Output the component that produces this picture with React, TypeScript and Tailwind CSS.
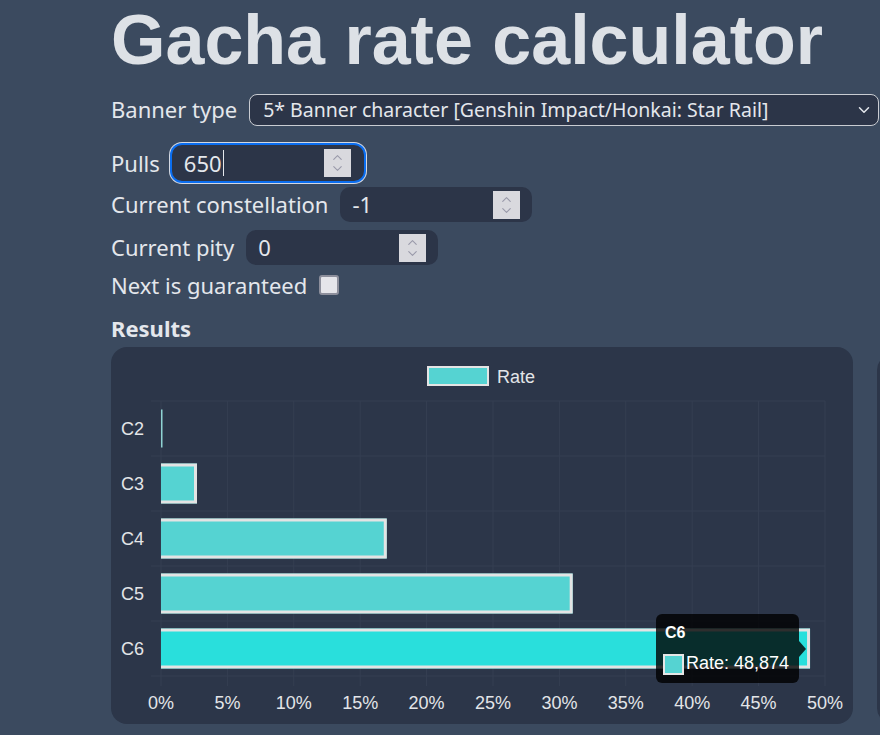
import { ChevronDown, ChevronUp } from "lucide-react";

const rows = [
  { label: "C2", value: 0.08 },
  { label: "C3", value: 2.71 },
  { label: "C4", value: 17.0 },
  { label: "C5", value: 31.0 },
  { label: "C6", value: 48.874 },
];

const ticks = [0, 5, 10, 15, 20, 25, 30, 35, 40, 45, 50];

// chart geometry, in card pixels
const left = 50;
const right = 714;
const top = 54;
const rowH = 55;
const xOf = (v: number) => left + ((right - left) * v) / 50;

const Spinner = () => (
  <div className="flex h-[28px] w-[27px] flex-col items-center justify-center bg-[#d9d9de] text-[#9a9aaa]">
    <ChevronUp size={15} strokeWidth={1.75} className="-mb-[2px]" />
    <ChevronDown size={15} strokeWidth={1.75} className="-mt-[2px]" />
  </div>
);

const NumberField = ({ value, focused }: { value: string; focused?: boolean }) => (
  <div
    className={
      focused
        ? "flex h-[36px] w-[192px] items-center justify-between rounded-[10px] bg-[#2c3548] pl-3 pr-[13px] shadow-[0_0_0_2px_#0b6ef0,0_0_0_3px_#d3d8e2]"
        : "flex h-[35px] w-[192px] items-center justify-between rounded-[10px] bg-[#2c3548] pl-3 pr-3"
    }
  >
    <span className="flex items-center text-[22px] text-[#e4e7ec]">
      {value}
      {focused && <span className="ml-[1px] h-[26px] w-px bg-[#e4e7ec]" />}
    </span>
    <Spinner />
  </div>
);

const Chart = () => (
  <svg width={742} height={377} className="block" fontFamily="'Liberation Sans', Arial, sans-serif">
    {/* legend */}
    <rect x={317} y={20} width={60} height={18} fill="#55d3d2" stroke="#e4e4e4" strokeWidth={2} />
    <text x={386} y={36} fontSize={18} fill="#e3e5e8">
      Rate
    </text>

    {/* grid */}
    {ticks.map((t) => (
      <line key={t} x1={xOf(t)} x2={xOf(t)} y1={top} y2={top + rowH * 5 + 10} stroke="#353f52" strokeWidth={1} />
    ))}
    {[0, 1, 2, 3, 4, 5].map((j) => (
      <line key={j} x1={left - 10} x2={right} y1={top + rowH * j} y2={top + rowH * j} stroke="#353f52" strokeWidth={1} />
    ))}

    {/* bars */}
    {rows.map((r, j) => {
      const cy = top + rowH * j + rowH / 2;
      const w = xOf(r.value) - left;
      const fill = r.label === "C6" ? "#29dfdc" : "#55d3d2";
      if (w < 3) {
        return <rect key={r.label} x={left} y={cy - 19} width={1.5} height={38} fill="#8fd3d3" />;
      }
      return (
        <g key={r.label}>
          <rect x={left} y={cy - 20} width={w} height={40} fill={fill} />
          <polyline
            points={`${left},${cy - 18.5} ${left + w - 1.5},${cy - 18.5} ${left + w - 1.5},${cy + 18.5} ${left},${cy + 18.5}`}
            fill="none"
            stroke="#e3e3e3"
            strokeWidth={3}
          />
        </g>
      );
    })}

    {/* axis labels */}
    {rows.map((r, j) => (
      <text key={r.label} x={33} y={top + rowH * j + rowH / 2 + 6.5} fontSize={18} fill="#e3e5e8" textAnchor="end">
        {r.label}
      </text>
    ))}
    {ticks.map((t) => (
      <text key={t} x={xOf(t)} y={362} fontSize={18} fill="#e3e5e8" textAnchor="middle">
        {t}%
      </text>
    ))}

    {/* tooltip */}
    <g>
      <rect x={545} y={267} width={143} height={69} rx={6} fill="rgba(0,0,0,0.8)" />
      <polygon points="688,294 695,302 688,310" fill="rgba(0,0,0,0.8)" />
      <text x={554} y={291} fontSize={16} fontWeight="bold" fill="#ffffff">
        C6
      </text>
      <rect x={553} y={308} width={19} height={19} fill="#55d3d2" stroke="#e6e6e6" strokeWidth={2} />
      <text x={575} y={322} fontSize={18} fill="#ffffff">
        Rate: 48,874
      </text>
    </g>
  </svg>
);

export default function App() {
  return (
    <div className="min-h-[735px] w-[880px] overflow-hidden bg-[#3b4a5f] pl-[111px] font-['Noto_Sans',sans-serif] text-[#e4e7ec]">
      <h1 className="h-[80px] font-['Liberation_Sans',Arial,sans-serif] text-[70px] font-bold leading-[80px] text-[#dde1e6]">
        Gacha rate calculator
      </h1>

      <div className="mt-[13px] flex items-center gap-3">
        <span className="text-[22px]">Banner type</span>
        <div className="flex h-[32px] w-[630px] shrink-0 items-center justify-between rounded-[8px] border border-[#c9ccd2] bg-[#2c3548] pl-[13px] pr-[5px]">
          <span className="text-[19.5px]">5* Banner character [Genshin Impact/Honkai: Star Rail]</span>
          <ChevronDown size={18} strokeWidth={2} className="text-[#e4e7ec]" />
        </div>
      </div>

      <div className="mt-[19px] flex items-center gap-3">
        <span className="text-[22px]">Pulls</span>
        <NumberField value="650" focused />
      </div>

      <div className="mt-[6px] flex items-center gap-3">
        <span className="text-[22px]">Current constellation</span>
        <NumberField value="-1" />
      </div>

      <div className="mt-[8px] flex items-center gap-3">
        <span className="text-[22px]">Current pity</span>
        <NumberField value="0" />
      </div>

      <div className="flex h-[40px] items-center gap-3">
        <span className="text-[22px]">Next is guaranteed</span>
        <div className="h-[20px] w-[20px] rounded-[3px] border-2 border-[#8d8f9c] bg-[#e5e5ea]" />
      </div>

      <h2 className="mt-[8px] text-[22px] font-bold leading-[30px]">Results</h2>

      <div className="mt-[4px] flex gap-6">
        <div className="h-[377px] w-[742px] shrink-0 overflow-hidden rounded-2xl bg-[#2c3649]">
          <Chart />
        </div>
        <div className="mt-[7px] h-[370px] w-[300px] shrink-0 rounded-2xl bg-[#2c3649]" />
      </div>
    </div>
  );
}
